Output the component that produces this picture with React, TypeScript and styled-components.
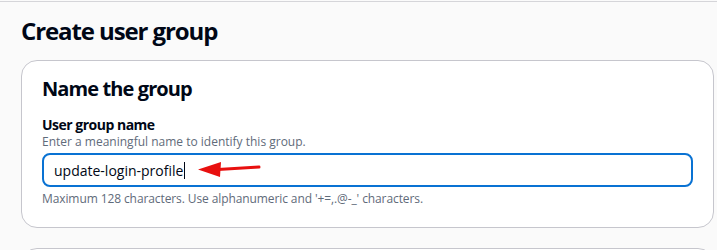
import React from 'react';
import styled, { createGlobalStyle } from 'styled-components';

const GlobalStyle = createGlobalStyle`
  body {
    margin: 0;
    background: #fafafa;
    font-family: 'Open Sans', 'Noto Sans', sans-serif;
    color: #000716;
  }
`;

export default function App(): React.ReactElement {
  return (
    <>
      <GlobalStyle />
      <Page>
        <PageTitle>Create user group</PageTitle>
        <Card>
          <CardTitle>Name the group</CardTitle>
          <Field>
            <Label>User group name</Label>
            <Hint>Enter a meaningful name to identify this group.</Hint>
            <InputBox>
              <InputText>update-login-profile</InputText>
              <Caret />
              <Arrow width="64" height="18" viewBox="0 0 64 18">
                {/* 빨간 화살표 주석 */}
                <path d="M20 9.5 L61 7" stroke="#e8100f" strokeWidth="3" strokeLinecap="round" />
                <path d="M0 9.5 L23 2 L22 17 Z" fill="#e8100f" />
              </Arrow>
            </InputBox>
            <Constraint>
              Maximum 128 characters. Use alphanumeric and '+=,.@-_' characters.
            </Constraint>
          </Field>
        </Card>
        <Card $peek />
      </Page>
    </>
  );
}

const Page = styled.div`
  border-top: 1px solid #d5d5d9;
  margin-top: 1px;
  padding: 0 3px 0 21px;
  display: flex;
  flex-direction: column;
  gap: 20px;
  height: 248px;
  overflow: hidden;
`;

const PageTitle = styled.h1`
  margin: 14px 0 -6px 0;
  font-size: 24px;
  line-height: 30px;
  font-weight: 700;
  letter-spacing: -1.1px;
`;

const Card = styled.section<{ $peek?: boolean }>`
  flex-shrink: 0;
  background: #ffffff;
  border: 1px solid #c6c6cd;
  border-radius: 16px;
  padding: 15px 20px 20px 20px;
  min-height: ${p => (p.$peek ? '60px' : 'auto')};
  box-sizing: border-box;
`;

const CardTitle = styled.h2`
  margin: 0 0 14px 0;
  font-size: 20px;
  line-height: 26px;
  font-weight: 700;
  letter-spacing: -0.9px;
`;

const Field = styled.div`
  display: flex;
  flex-direction: column;
`;

const Label = styled.div`
  font-size: 14px;
  line-height: 18px;
  font-weight: 700;
  letter-spacing: -0.5px;
`;

const Hint = styled.div`
  font-size: 12px;
  line-height: 16px;
  color: #5f6b7a;
  margin-bottom: 3px;
`;

const InputBox = styled.div`
  position: relative;
  display: flex;
  align-items: center;
  height: 34px;
  box-sizing: border-box;
  border: 2px solid #0972d3;
  border-radius: 8px;
  padding: 0 10px;
  background: #fff;
`;

const InputText = styled.span`
  font-size: 14px;
  color: #000716;
`;

const Caret = styled.span`
  display: inline-block;
  width: 1px;
  height: 17px;
  background: #000716;
  margin-left: 1px;
`;

const Arrow = styled.svg`
  position: absolute;
  left: 154px;
  top: 5px;
`;

const Constraint = styled.div`
  margin-top: 4px;
  font-size: 12px;
  line-height: 16px;
  color: #5f6b7a;
  letter-spacing: -0.1px;
`;
